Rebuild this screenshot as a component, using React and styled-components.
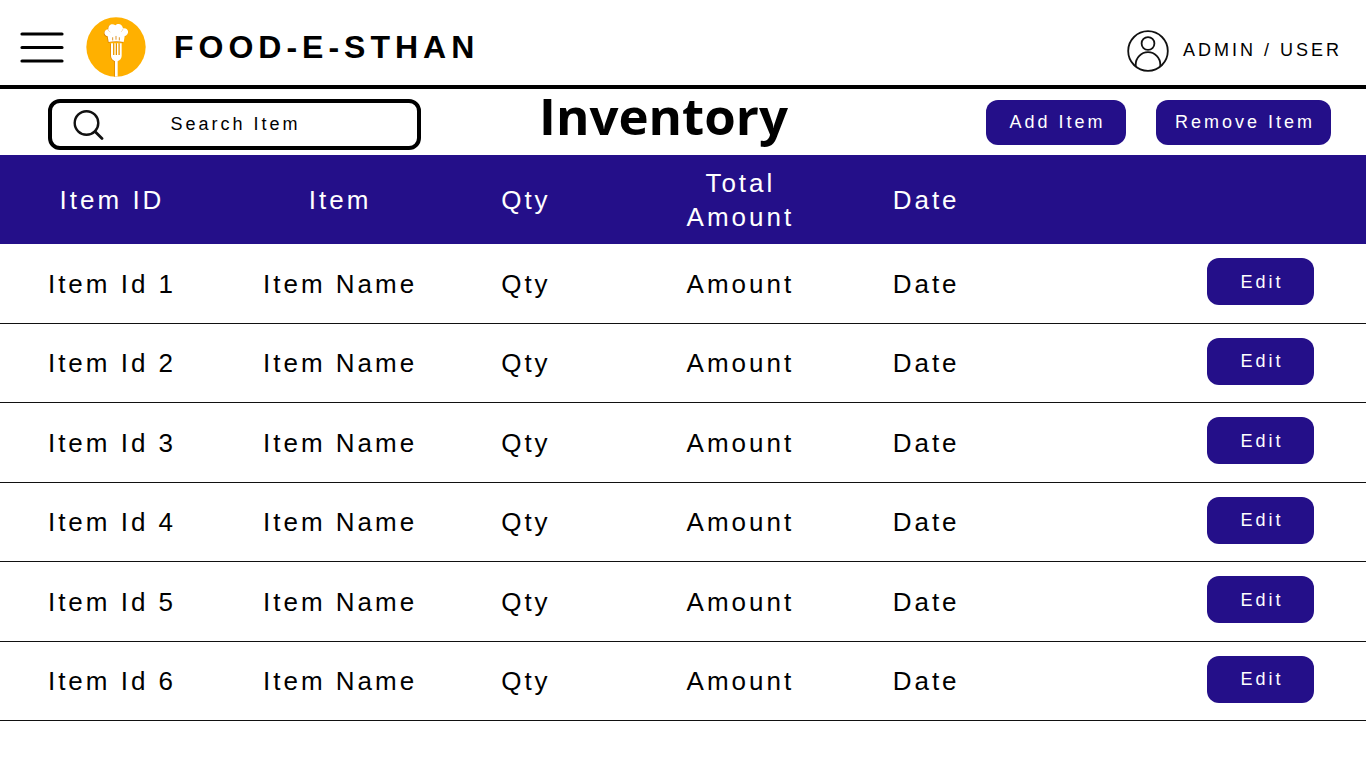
import React from "react";
import styled, { createGlobalStyle } from "styled-components";

const purple = "#240f89";

const GlobalStyle = createGlobalStyle`
  * { box-sizing: border-box; }
  body {
    margin: 0;
    background: #fff;
    color: #000;
    font-family: "Liberation Sans", Arial, sans-serif;
  }
`;

const Header = styled.header`
  display: flex;
  align-items: center;
  height: 89px;
  padding: 8px 24px 0 20px;
  border-bottom: 4px solid #000;
`;

const MenuButton = styled.button`
  display: flex;
  padding: 0;
  border: 0;
  background: none;
  cursor: pointer;
`;

const Brand = styled.a`
  display: flex;
  align-items: center;
  gap: 28px;
  margin-left: 22px;
  color: inherit;
  font-size: 32px;
  font-weight: 700;
  line-height: 40px;
  letter-spacing: 5px;
  text-decoration: none;
  white-space: nowrap;
`;

const UserLink = styled.a`
  display: flex;
  align-items: center;
  gap: 14px;
  margin: 8px 0 0 auto;
  color: inherit;
  font-size: 18px;
  letter-spacing: 3px;
  text-decoration: none;
  white-space: nowrap;
`;

const Toolbar = styled.section`
  display: flex;
  align-items: center;
  height: 66px;
  padding: 0 35px 0 48px;
`;

const SearchBox = styled.label`
  display: flex;
  align-items: center;
  flex: 0 1 373px;
  height: 51px;
  margin-top: 4px;
  padding: 0 50px 0 21px;
  border: 4px solid #000;
  border-radius: 12px;
`;

const SearchInput = styled.input`
  flex: 1;
  min-width: 0;
  padding: 0;
  border: 0;
  outline: 0;
  background: none;
  color: #000;
  font: inherit;
  font-size: 18px;
  letter-spacing: 3px;
  text-align: center;
  &::placeholder { color: #000; opacity: 1; }
`;

const Title = styled.h1`
  margin: 0 24px 14px 118px;
  font-family: "Open Sans", sans-serif;
  font-size: 51px;
  font-weight: 700;
  line-height: 60px;
`;

const Actions = styled.div`
  display: flex;
  gap: 30px;
  margin-left: auto;
`;

const Button = styled.button`
  width: ${(p) => p.$width}px;
  height: ${(p) => p.$height || 45}px;
  padding: 0 0 0 3px;
  border: 0;
  border-radius: 12px;
  background: ${purple};
  color: #fff;
  font: inherit;
  font-size: 18px;
  letter-spacing: 3px;
  white-space: nowrap;
  cursor: pointer;
`;

const Table = styled.table`
  width: 100%;
  table-layout: fixed;
  border-collapse: separate;
  border-spacing: 0;
  font-size: 26px;
  line-height: 34px;
  letter-spacing: 3px;
`;

const Col = styled.col`
  width: ${(p) => p.$width};
`;

const HeadCell = styled.th`
  height: 89px;
  padding: 0;
  background: ${purple};
  color: #fff;
  font-weight: 400;
  text-align: center;
  white-space: nowrap;
`;

const Row = styled.tr`
  height: 79px;
  &:nth-child(odd) { height: 80px; }
`;

const Cell = styled.td`
  padding: 0;
  border-bottom: 1px solid #111;
  text-align: center;
  white-space: nowrap;
`;

const ActionCell = styled(Cell)`
  padding: 0 52px 4px 0;
  text-align: right;
  line-height: 0;
`;

const MenuIcon = () => (
  <svg width="44" height="32" viewBox="0 0 44 32" aria-hidden="true">
    <path d="M2 3H42M2 16.500H42M2 30H42" stroke="#000" strokeWidth="3.2" strokeLinecap="round" />
  </svg>
);

const Logo = () => (
  <svg width="60" height="60" viewBox="0 0 180 180" aria-hidden="true">
    <defs>
      <clipPath id="disc"><circle cx="90" cy="90" r="89" /></clipPath>
    </defs>
    <circle cx="90" cy="90" r="89" fill="#ffb000" />
    <g clipPath="url(#disc)">
      <path d="M68 75L65 58C51 55 53 38 67 37C66 22 80 18 88 25C97 16 110 23 111 34C130 32 131 53 116 58L113 75Q91 70 68 75Z" fill="#d98200" transform="translate(-2 2)" />
      <path d="M68 75L65 58C51 55 53 38 67 37C66 22 80 18 88 25C97 16 110 23 111 34C130 32 131 53 116 58L113 75Q91 70 68 75Z" fill="#fff" />
      <path d="M80 69V62M90 67V58M100 69V62" fill="none" stroke="#d98200" strokeWidth="2.500" strokeLinecap="round" />
      <path d="M66 38Q67 43 72 45M111 36Q110 42 106 44" fill="none" stroke="#f3c98a" strokeWidth="2" strokeLinecap="round" />
      <path d="M75 79H81V114H85V79H89V114H93V79H97V114H101V79H107V117Q106 128 95 133V180H87V133Q76 128 75 117Z" fill="#d98200" transform="translate(-2 1)" />
      <path d="M75 79H81V114H85V79H89V114H93V79H97V114H101V79H107V117Q106 128 95 133V180H87V133Q76 128 75 117Z" fill="#fff" />
    </g>
  </svg>
);

const UserIcon = () => (
  <svg width="42" height="42" viewBox="0 0 42 42" fill="none" stroke="#111" strokeWidth="1.800" aria-hidden="true">
    <circle cx="21" cy="21" r="19.800" />
    <circle cx="21" cy="13.500" r="6.400" />
    <path d="M8.700 36V34.500A12.300 12.300 0 0 1 33.300 34.500V36" />
  </svg>
);

const SearchIcon = () => (
  <svg width="31" height="31" viewBox="0 0 31 31" fill="none" stroke="#111" aria-hidden="true">
    <circle cx="13.500" cy="14" r="11.800" strokeWidth="2.400" />
    <path d="M22 22.500L29 29.500" strokeWidth="2.800" strokeLinecap="round" />
  </svg>
);

const items = [1, 2, 3, 4, 5, 6].map((n) => ({
  id: `Item Id ${n}`,
  name: "Item Name",
  qty: "Qty",
  amount: "Amount",
  date: "Date",
}));

export default function App() {
  return (
    <>
      <GlobalStyle />
      <Header>
        <MenuButton type="button" aria-label="Menu"><MenuIcon /></MenuButton>
        <Brand href="#home"><Logo />FOOD-E-STHAN</Brand>
        <UserLink href="#account"><UserIcon />ADMIN / USER</UserLink>
      </Header>
      <main>
        <Toolbar>
          <SearchBox>
            <SearchIcon />
            <SearchInput type="text" placeholder="Search Item" aria-label="Search Item" />
          </SearchBox>
          <Title>Inventory</Title>
          <Actions>
            <Button type="button" $width={140}>Add Item</Button>
            <Button type="button" $width={175}>Remove Item</Button>
          </Actions>
        </Toolbar>
        <Table>
          <colgroup>
            <Col $width="16.4%" />
            <Col $width="17%" />
            <Col $width="10.2%" />
            <Col $width="21.2%" />
            <Col $width="6%" />
            <Col />
          </colgroup>
          <thead>
            <tr>
              <HeadCell scope="col">Item ID</HeadCell>
              <HeadCell scope="col">Item</HeadCell>
              <HeadCell scope="col">Qty</HeadCell>
              <HeadCell scope="col">Total<br />Amount</HeadCell>
              <HeadCell scope="col">Date</HeadCell>
              <HeadCell scope="col" aria-label="Actions" />
            </tr>
          </thead>
          <tbody>
            {items.map((item) => (
              <Row key={item.id}>
                <Cell>{item.id}</Cell>
                <Cell>{item.name}</Cell>
                <Cell>{item.qty}</Cell>
                <Cell>{item.amount}</Cell>
                <Cell>{item.date}</Cell>
                <ActionCell>
                  <Button type="button" $width={107} $height={47}>Edit</Button>
                </ActionCell>
              </Row>
            ))}
          </tbody>
        </Table>
      </main>
    </>
  );
}
